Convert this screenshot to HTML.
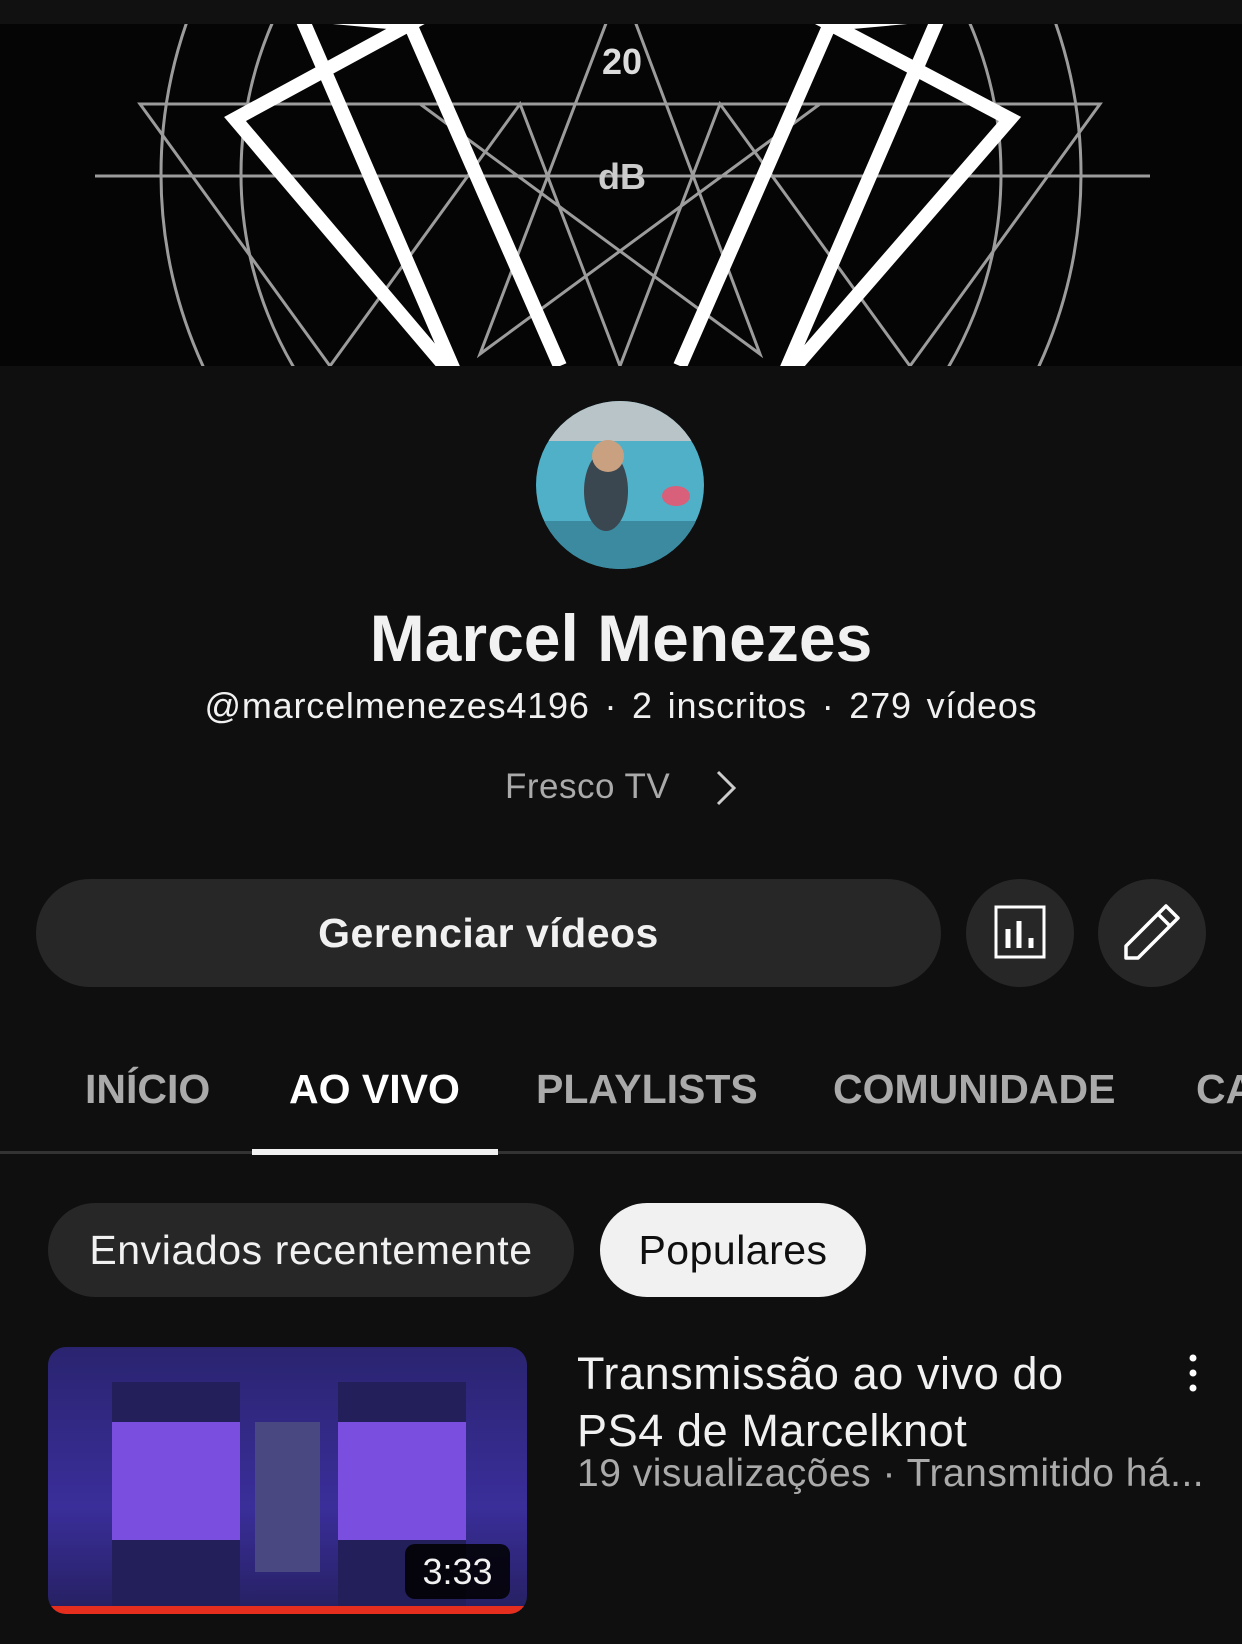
<!DOCTYPE html>
<html><head><meta charset="utf-8"><style>
body{margin:0;width:1242px;height:1644px;background:#0f0f0f;overflow:hidden;font-family:"Liberation Sans",sans-serif;color:#f1f1f1;position:relative}
.a{position:absolute}
.tab{position:absolute;top:1066px;font-size:41px;font-weight:bold;color:#aaa;white-space:nowrap}
</style></head><body>
<div class="a" style="top:0;left:0;width:1242px;height:24px;background:#111"></div>
<svg class="a" style="top:24px;left:0" width="1242" height="342" viewBox="0 0 1242 342">
<rect width="1242" height="342" fill="#050505"/>
<g fill="none" stroke="#ddd" stroke-width="3" opacity=".7">
<circle cx="621" cy="150" r="460"/><circle cx="621" cy="150" r="380"/>
<line x1="95" y1="152" x2="1150" y2="152"/>
<polygon points="621,-40 760,330 420,80 820,80 480,330"/>
<polygon points="140,80 330,342 520,80 620,342 720,80 910,342 1100,80"/>
</g>
<g fill="none" stroke="#fff" stroke-width="14">
<polygon points="410,0 235,95 460,360 300,-10"/>
<polygon points="830,0 1010,95 780,360 940,-10"/>
<line x1="410" y1="0" x2="560" y2="342"/><line x1="830" y1="0" x2="680" y2="342"/>
</g>
<text x="622" y="50" fill="#ddd" font-size="36" font-weight="bold" text-anchor="middle" font-family="Liberation Sans">20</text>
<text x="622" y="165" fill="#ccc" font-size="36" font-weight="bold" text-anchor="middle" font-family="Liberation Sans">dB</text>
</svg>
<svg class="a" style="top:401px;left:536px" width="168" height="168">
<defs><clipPath id="c"><circle cx="84" cy="84" r="84"/></clipPath></defs>
<g clip-path="url(#c)">
<rect width="168" height="168" fill="#4fb0c8"/><rect width="168" height="40" fill="#b9c4c8"/>
<rect y="120" width="168" height="48" fill="#3c8aa0"/>
<ellipse cx="70" cy="90" rx="22" ry="40" fill="#3a4650"/><circle cx="72" cy="55" r="16" fill="#c9a080"/>
<ellipse cx="140" cy="95" rx="14" ry="10" fill="#d8607a"/></g></svg>
<div class="a" style="top:600px;left:0;width:1242px;text-align:center;font-size:66px;font-weight:bold">Marcel Menezes</div>
<div class="a" style="top:685px;left:0;width:1242px;text-align:center;font-size:36px;letter-spacing:0.8px;word-spacing:4px">@marcelmenezes4196 · 2 inscritos · 279 vídeos</div>
<div class="a" style="top:767px;left:505px;font-size:35px;color:#aaa;letter-spacing:0.5px">Fresco TV</div>
<svg class="a" style="top:768px;left:712px" width="28" height="40"><path d="M6 4 L22 20 L6 36" stroke="#ccc" stroke-width="3" fill="none"/></svg>
<div class="a" style="top:879px;left:36px;width:905px;height:108px;border-radius:54px;background:#272727;text-align:center;line-height:108px;font-size:41px;font-weight:bold;letter-spacing:0.5px">Gerenciar vídeos</div>
<div class="a" style="top:879px;left:966px;width:108px;height:108px;border-radius:54px;background:#272727"></div>
<svg class="a" style="top:905px;left:994px" width="54" height="56"><rect x="2" y="2" width="48" height="50" fill="none" stroke="#fff" stroke-width="3"/><path d="M14 43V24M25 43V16M37 43V33" stroke="#fff" stroke-width="5"/></svg>
<div class="a" style="top:879px;left:1098px;width:108px;height:108px;border-radius:54px;background:#272727"></div>
<svg class="a" style="top:902px;left:1122px" width="60" height="60"><path d="M4 56 L4 44 L44 4 L56 16 L16 56 Z M36 12 L48 24" stroke="#fff" stroke-width="3.5" fill="none" stroke-linejoin="round"/></svg>
<div class="tab" style="left:85px">INÍCIO</div>
<div class="tab" style="left:289px;color:#fff">AO VIVO</div>
<div class="tab" style="left:536px">PLAYLISTS</div>
<div class="tab" style="left:833px">COMUNIDADE</div>
<div class="tab" style="left:1196px">CA</div>
<div class="a" style="top:1151px;left:0;width:1242px;height:3px;background:#333"></div>
<div class="a" style="top:1149px;left:252px;width:246px;height:6px;background:#f1f1f1"></div>
<div class="a" style="top:1203px;left:48px;width:526px;height:94px;border-radius:47px;background:#272727;text-align:center;line-height:94px;font-size:41px;letter-spacing:0.6px">Enviados recentemente</div>
<div class="a" style="top:1203px;left:600px;width:266px;height:94px;border-radius:47px;background:#f1f1f1;color:#0f0f0f;text-align:center;line-height:94px;font-size:41px;letter-spacing:0.5px">Populares</div>
<div class="a" style="top:1347px;left:48px;width:479px;height:267px;border-radius:18px;overflow:hidden;background:linear-gradient(#2a2470,#3a2e9a 60%,#252060)">
<div class="a" style="top:35px;left:64px;width:128px;height:240px;background:#221f5a"></div>
<div class="a" style="top:75px;left:64px;width:128px;height:118px;background:#7a4fe0"></div>
<div class="a" style="top:35px;left:290px;width:128px;height:240px;background:#221f5a"></div>
<div class="a" style="top:75px;left:290px;width:128px;height:118px;background:#7a4fe0"></div>
<div class="a" style="top:75px;left:207px;width:65px;height:150px;background:#4a4880"></div>
<div class="a" style="bottom:0;left:0;width:479px;height:8px;background:#e62e1f"></div>
<div class="a" style="top:197px;left:357px;width:105px;height:55px;border-radius:10px;background:rgba(0,0,0,.85);text-align:center;line-height:55px;font-size:36px">3:33</div>
</div>
<div class="a" style="top:1345px;left:577px;font-size:45px;line-height:57px;letter-spacing:0.6px">Transmissão ao vivo do<br>PS4 de Marcelknot</div>
<div class="a" style="top:1452px;left:577px;font-size:39px;color:#aaa;white-space:nowrap;letter-spacing:0.5px">19 visualizações · Transmitido há...</div>
<svg class="a" style="top:1353px;left:1186px" width="14" height="40"><circle cx="7" cy="5" r="3.5" fill="#fff"/><circle cx="7" cy="20" r="3.5" fill="#fff"/><circle cx="7" cy="35" r="3.5" fill="#fff"/></svg>
</body></html>
